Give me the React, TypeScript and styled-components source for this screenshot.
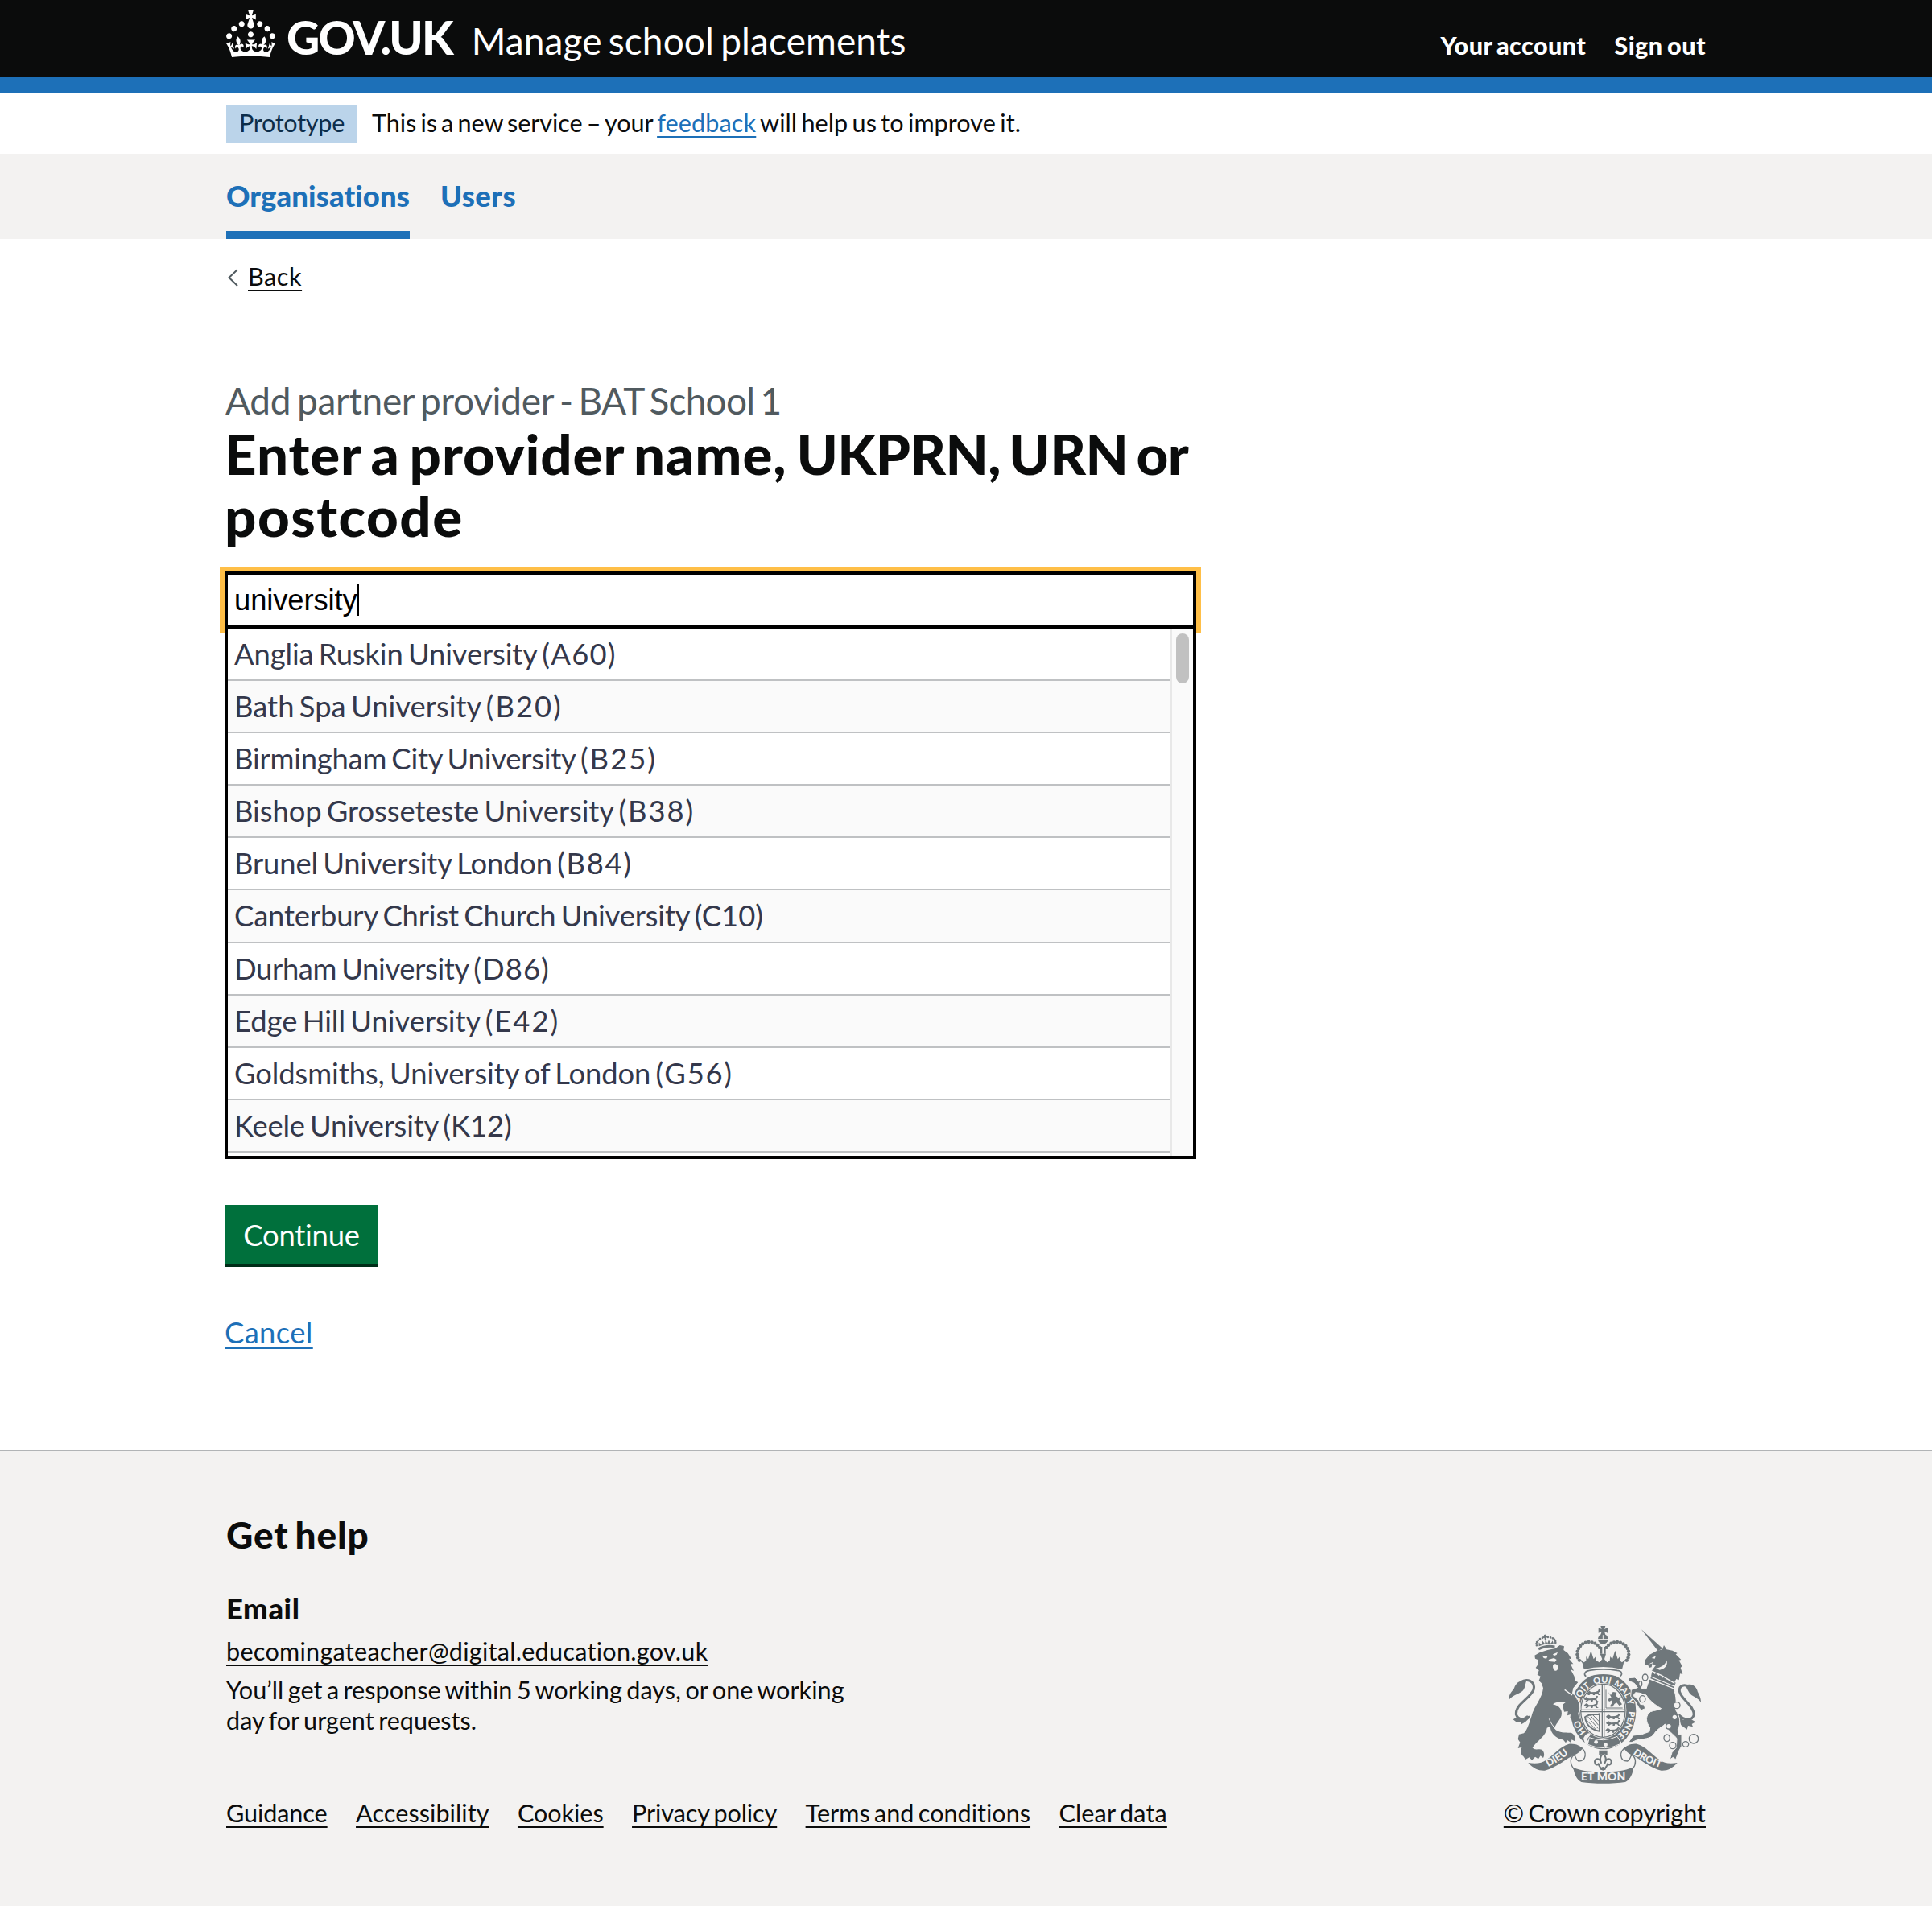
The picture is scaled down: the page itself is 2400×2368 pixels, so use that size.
import React from 'react';
import styled, { createGlobalStyle } from 'styled-components';

const c = {
  ink: '#0b0c0c',
  blue: '#1d70b8',
  grey: '#f3f2f1',
  secondary: '#505a5f',
  green: '#00703c',
  focus: '#ffbf47',
  crest: '#6f777b',
};

const GlobalStyle = createGlobalStyle`
  *, *::before, *::after { box-sizing: border-box; word-spacing: -0.08em; }
  body {
    margin: 0;
    background: #fff;
    color: ${c.ink};
    font-family: Lato, "Liberation Sans", sans-serif;
    font-variant-ligatures: none;
    -webkit-font-smoothing: antialiased;
  }
  h1, h2, h3, p, ul { margin: 0; padding: 0; }
  ul { list-style: none; }
`;

type Tracked = { $track?: number };
const tracking = (p: Tracked) => `letter-spacing: ${p.$track ?? 0}em;`;

const Page = styled.div`
  display: flex;
  flex-direction: column;
  min-height: 2368px;
`;

const Container = styled.div`
  width: 1838px;
  margin: 0 auto;
`;

const Run = styled.span<Tracked>`
  ${tracking}
`;

/* Header */
const HeaderBar = styled.header`
  height: 115px;
  background: ${c.ink};
  border-bottom: 19px solid ${c.blue};
  color: #fff;
`;
const HeaderRow = styled(Container)`
  display: flex;
  align-items: baseline;
  padding-top: 16px;
  white-space: nowrap;
`;
const CrownIcon = styled.svg`
  align-self: flex-start;
  width: 61px;
  height: 58px;
  margin: -3px 14px 0 0;
  fill: #fff;
`;
const LogoType = styled.span<Tracked>`
  font-size: 57px;
  line-height: 60px;
  font-weight: 900;
  ${tracking}
`;
const ServiceName = styled.span<Tracked>`
  margin-left: 24px;
  font-size: 46px;
  line-height: 58px;
  ${tracking}
`;
const AccountNav = styled.nav`
  display: flex;
  gap: 35px;
  margin-left: auto;
`;
const AccountLink = styled.a<Tracked>`
  font-size: 30.6px;
  line-height: 38px;
  font-weight: 900;
  ${tracking}
`;

/* Phase banner */
const PhaseRow = styled(Container)`
  display: flex;
  height: 76px;
  padding-top: 15px;
  font-size: 30.6px;
  line-height: 46px;
  white-space: nowrap;
`;
const Tag = styled.strong<Tracked>`
  width: 163px;
  height: 48px;
  margin-right: 18px;
  background: #bbd4ea;
  color: #0c2d4a;
  font-weight: 400;
  text-align: center;
  ${tracking}
`;
const PhaseText = styled.p<Tracked>`
  ${tracking}
`;

const Link = styled.a<Tracked & { $ink?: boolean }>`
  color: ${p => (p.$ink ? c.ink : c.blue)};
  text-decoration: underline;
  text-decoration-thickness: 2px;
  text-underline-offset: 5px;
  text-decoration-skip-ink: none;
  white-space: nowrap;
  ${p => (p.$track === undefined ? '' : tracking(p))}
`;

/* Primary navigation */
const PrimaryNav = styled.nav`
  height: 106px;
  background: ${c.grey};
`;
const NavList = styled(Container)`
  display: flex;
  gap: 38px;
`;
const NavItem = styled.a<Tracked & { $current?: boolean }>`
  height: 106px;
  padding-top: 29px;
  border-bottom: 10px solid ${p => (p.$current ? c.blue : 'transparent')};
  color: ${c.blue};
  font-size: 36.4px;
  line-height: 47px;
  font-weight: 900;
  ${tracking}
`;

/* Main */
const Main = styled.main`
  width: 1842px;
  height: 1504px;
  margin: 0 auto;
  padding-top: 28px;
`;
const BackRow = styled.div`
  display: flex;
  align-items: center;
  gap: 12px;
  padding-left: 4px;
  height: 38px;
  margin-bottom: 106px;
  font-size: 30.6px;
  line-height: 38px;
`;
const Chevron = styled.svg`
  width: 13px;
  height: 22px;
  margin-top: 2px;
  fill: none;
  stroke: ${c.secondary};
  stroke-width: 2;
`;
const Column = styled.div`
  width: 1207px;
`;
const Caption = styled.span<Tracked>`
  display: block;
  color: ${c.secondary};
  font-size: 46px;
  line-height: 57px;
  padding-left: 1px;
  ${tracking}
`;
const Heading = styled.h1`
  margin-bottom: 30.8px;
  font-size: 69px;
  line-height: 76.6px;
  font-weight: 900;
`;
const Field = styled.div`
  display: flex;
  align-items: center;
  height: 71px;
  padding-left: 8px;
  border: 4px solid #000;
  box-shadow: 0 0 0 6px ${c.focus};
  color: #000;
  font-family: "Liberation Sans", Arial, sans-serif;
  font-size: 36.4px;
  line-height: 63px;
  letter-spacing: -0.1px;
`;
const Caret = styled.span`
  width: 2px;
  height: 40px;
  background: #000;
`;
const Menu = styled.div`
  position: relative;
  display: flex;
  height: 659px;
  margin-bottom: 57px;
  border: solid #000;
  border-width: 0 4px 4px;
  background: #fff;
  overflow: hidden;
`;
const Options = styled.ul`
  flex: 1;
`;
const Option = styled.li<Tracked>`
  height: 65.1px;
  padding-left: 8px;
  border-bottom: 2px solid #bfc1c3;
  color: #34384b;
  font-size: 36.4px;
  line-height: 63px;
  white-space: nowrap;
  ${tracking}
  &:nth-child(even) { background: #fafafa; }
`;
const ScrollTrack = styled.div`
  width: 28px;
  padding: 6px 0 0 5px;
  border-left: 2px solid #e8e8e8;
  background: #fafafa;
`;
const ScrollThumb = styled.div`
  width: 16px;
  height: 62px;
  border-radius: 8px;
  background: #c1c1c1;
`;
const Button = styled.button<Tracked>`
  display: block;
  width: 191px;
  height: 73px;
  margin: 0 0 61px;
  padding: 1px 0 0;
  border: 0;
  background: ${c.green};
  box-shadow: 0 4px 0 #002d18;
  color: #fff;
  font: 400 36.4px/72px Lato, sans-serif;
  ${tracking}
`;
const CancelRow = styled.p`
  font-size: 36.4px;
  line-height: 48px;
`;

/* Footer */
const FooterBar = styled.footer`
  flex: 1;
  padding-top: 75px;
  border-top: 2px solid #b1b4b6;
  background: ${c.grey};
  font-size: 30.6px;
  line-height: 38.3px;
`;
const FooterRow = styled(Container)`
  display: flex;
  justify-content: space-between;
  align-items: flex-end;
`;
const FooterTitle = styled.h2<Tracked>`
  margin-bottom: 38.6px;
  font-size: 46px;
  line-height: 57px;
  font-weight: 900;
  ${tracking}
`;
const FooterSubtitle = styled.h3<Tracked>`
  margin-bottom: 11px;
  font-size: 36.4px;
  line-height: 48px;
  font-weight: 900;
  ${tracking}
`;
const FooterText = styled.p<Tracked>`
  margin: 10px 0 77px;
  ${tracking}
`;
const FooterLinks = styled.div`
  display: flex;
  gap: 35.4px;
`;
const Copyright = styled.div`
  display: flex;
  flex-direction: column;
  align-items: center;
  gap: 16px;
`;
const Crest = styled.svg`
  width: 244px;
  height: 200px;
  margin-left: 3px;
  font-family: Lato, sans-serif;
  font-weight: 900;
  text { word-spacing: 0; }
`;

const Crown = () => (
  <CrownIcon viewBox="0 0 32 30" preserveAspectRatio="none">
    <path d="M22.6 10.4c-1 .4-2-.1-2.4-1-.4-.9.1-2 1-2.4.9-.4 2 .1 2.4 1s-.1 2-1 2.4m-5.9 6.7c-.9.4-2-.1-2.4-1-.4-.9.1-2 1-2.4.9-.4 2 .1 2.4 1s-.1 2-1 2.4m10.8-3.7c-1 .4-2-.1-2.4-1-.4-.9.1-2 1-2.4.9-.4 2 .1 2.4 1s0 2-1 2.4m3.3 4.8c-1 .4-2-.1-2.4-1-.4-.9.1-2 1-2.4.9-.4 2 .1 2.4 1s-.1 2-1 2.4M17 4.7l2.3 1.2V2.5l-2.3.7-.2-.2.9-3h-3.4l.9 3-.2.2c-.1.1-2.3-.7-2.3-.7v3.4L15 4.7c.1.1.1.2.2.2l-1.3 4c-.1.2-.1.4-.1.6 0 1.1.8 2 1.9 2.2h.7c1-.2 1.9-1.1 1.9-2.1 0-.2 0-.4-.1-.6l-1.3-4c-.1-.2 0-.2.1-.3m-7.6 5.7c.9.4 2-.1 2.4-1 .4-.9-.1-2-1-2.4-.9-.4-2 .1-2.4 1s0 2 1 2.4m-5 3c.9.4 2-.1 2.4-1 .4-.9-.1-2-1-2.4-.9-.4-2 .1-2.4 1s.1 2 1 2.4m-3.2 4.8c.9.4 2-.1 2.4-1 .4-.9-.1-2-1-2.4-.9-.4-2 .1-2.4 1s0 2 1 2.4m14.8 11c4.4 0 8.6.3 12.3.8 1.1-4.5 2.4-7 3.7-8.8l-2.5-.9c.2 1.3.3 1.9 0 2.7-.4-.4-.8-1.1-1.1-2.3l-1.2 4c.7-.5 1.3-.8 2-.9-1.1 2.5-2.6 3.1-3.5 3-1.1-.2-1.7-1.2-1.5-2.1.3-1.2 1.5-1.5 2.1-.1 1.1-2.3-.8-3-2-2.3 1.9-1.9 2.1-3.5.6-5.6-2.1 1.6-2.1 3.2-1.2 5.5-1.2-1.4-3.2-.6-2.5 1.6.9-1.4 2.1-.5 1.9.8-.2 1.1-1.7 2.1-3.5 1.9-2.7-.2-2.9-2.1-2.9-3.6.7-.1 1.9.5 2.9 1.9l.4-4.3c-1.1 1.1-2.1 1.4-3.2 1.4.4-1.2 2.1-3 2.1-3h-5.4s1.7 1.9 2.1 3c-1.1 0-2.1-.2-3.2-1.4l.4 4.3c1-1.4 2.2-2 2.9-1.9-.1 1.5-.2 3.4-2.9 3.6-1.9.2-3.4-.8-3.5-1.9-.2-1.3 1-2.2 1.9-.8.7-2.3-1.2-3-2.5-1.6.9-2.2.9-3.9-1.2-5.5-1.5 2-1.3 3.7.6 5.6-1.2-.7-3.1 0-2 2.3.6-1.4 1.8-1.1 2.1.1.2.9-.3 1.9-1.5 2.1-.9.2-2.4-.5-3.5-3 .6 0 1.2.3 2 .9l-1.2-4c-.3 1.1-.7 1.9-1.1 2.3-.3-.8-.2-1.4 0-2.7l-2.9.9C1.3 23 2.6 25.5 3.7 30c3.7-.5 7.9-.8 12.3-.8" />
  </CrownIcon>
);

const arcDots = (cx: number, cy: number, rx: number, ry: number, from: number, to: number, n: number) =>
  Array.from({ length: n }, (_, i) => {
    const a = ((from + ((to - from) * i) / (n - 1)) * Math.PI) / 180;
    return [cx + rx * Math.cos(a), cy - ry * Math.sin(a)];
  });

/* One passant lion of the quartered shield. */
const Passant = ({ x, y }: { x: number; y: number }) => (
  <path
    transform={`translate(${x} ${y})`}
    d="M2 6 L8 1 L14 3 L18 7 L34 6 L44 2 L47 -4 L52 -2 L50 5 L46 9 L50 15 L55 18 L46 18 L42 13 L34 12 L32 18 L25 18 L26 13 L18 13 L12 18 L5 18 L10 13 L4 12 L0 9 Z"
  />
);

/* Baseline of the garter motto, clockwise from the bottom. */
const ring = 'M424 482 A94 106 0 0 1 424 270 A94 106 0 0 1 424 482';
const ringWords: [string, number][] = [['HO', 98], ['SOIT', 226], ['QUI', 310], ['MAL', 388], ['Y', 438], ['PENSE', 522]];

const RoyalArms = () => (
  <Crest viewBox="68 52 732 600" fill={c.crest}>
    <defs>
      <path id="ring" d={ring} />
      <path id="dieu" d="M206 590 Q258 566 306 526" />
      <path id="droit" d="M524 530 Q578 570 650 591" />
      <clipPath id="oval"><ellipse cx="423" cy="374" rx="80" ry="97" /></clipPath>
    </defs>

    {/* lion tail */}
    <path fill="none" stroke={c.crest} strokeWidth="9" d="M150 396 C128 412 106 408 99 388 C96 350 150 330 164 296 C172 264 140 252 116 268" />
    <path d="M72 333 C72 308 88 300 92 290 C98 270 116 258 138 262 C134 270 134 284 128 294 C120 310 92 310 72 333Z" />
    <path d="M88 407 L104 396 L122 404 L140 392 L152 398 L134 416 L116 426 L118 414 L102 418Z" />

    {/* garter */}
    <ellipse cx="424" cy="376" rx="122" ry="142" />
    <ellipse cx="423" cy="374" rx="87" ry="103" fill={c.grey} />
    <ellipse cx="423" cy="374" rx="83" ry="99" fill="none" stroke={c.crest} strokeWidth="4" />
    <path fill="none" stroke={c.crest} strokeWidth="4" d="M420 276 V472 M427 276 V472 M341 371 H505 M341 378 H505" />
    <g clipPath="url(#oval)">
      <Passant x={360} y={298} />
      <Passant x={352} y={322} />
      <Passant x={352} y={346} />
      <Passant x={434} y={388} />
      <Passant x={434} y={412} />
      <Passant x={432} y={438} />
      <path d="M442 304 L452 316 L460 304 L474 306 L470 318 L480 326 L490 322 L484 336 L494 350 L484 356 L474 344 L466 348 L458 360 L448 358 L456 346 L458 334 L446 340 L440 332 L454 324Z" />
      <path fill="none" stroke={c.crest} strokeWidth="3" d="M434 296 V364 H496" />
      <path fill="none" stroke={c.crest} strokeWidth="6" d="M356 398 C376 382 400 392 410 386 V450 C384 446 360 430 356 398Z" />
      <path fill="none" stroke={c.crest} strokeWidth="3" d="M366 396 L404 440 M376 392 L406 428 M386 391 L408 414 M360 408 L396 444" />
    </g>
    {/* garter buckle */}
    <path fill={c.grey} d="M350 478 C356 462 372 452 376 462 C374 472 362 474 366 484 C374 492 366 504 356 496Z" />
    <path d="M372 474 Q424 494 476 470 L492 496 Q430 528 366 500Z" stroke={c.grey} strokeWidth="3" />
    <circle cx="397" cy="491" r="7" fill={c.grey} />
    <circle cx="433" cy="501" r="7" fill={c.grey} />
    <g fill={c.grey} fontSize="33" textAnchor="middle">
      {ringWords.map(([word, offset]) => (
        <text key={word}><textPath href="#ring" startOffset={offset}>{word}</textPath></text>
      ))}
    </g>

    {/* lion */}
    <path d="M168 168 L186 158 L216 148 L246 142 L262 130 L278 134 L276 148 L292 160 L306 182 L296 180 L312 200 L302 200 L314 226 L302 220 L316 246 L318 262 L330 268 L312 290 L308 308 L322 326 L332 346 L334 366 L328 382 C328 392 330 396 332 401 L320 396 L318 406 L308 396 L300 404 L302 388 L290 392 L292 376 L278 378 L272 352 L284 342 C262 344 250 338 236 350 C262 356 272 372 268 392 C262 412 246 424 242 440 C254 458 284 456 304 456 C316 462 322 474 318 488 L306 482 L304 494 L290 484 L284 494 L274 482 C254 480 234 464 228 444 L226 432 L214 438 C212 468 176 486 160 512 C168 524 186 514 196 520 C204 528 206 540 200 550 L190 542 L182 554 L170 546 L158 558 L148 548 L134 556 L126 544 C114 536 118 522 120 510 L106 514 L114 492 L106 480 L110 462 L128 458 C142 444 148 418 156 396 C166 356 196 330 200 290 L194 272 L184 262 L190 246 L178 240 L184 224 L172 214 L182 200 L180 184 L170 180Z" />
    <path fill="none" stroke={c.grey} strokeWidth="4" d="M336 266 L315 291 L312 308 L326 325 L336 346 L338 368 L332 384 L336 404 M280 296 L308 316" />
    <path fill={c.grey} d="M196 168 L216 172 L212 180 L202 178Z M236 164 L254 156 L250 166 L240 170Z M220 184 L240 178 L250 184 L244 192 L222 190Z M238 202 C246 196 256 204 256 214 C254 224 248 228 242 224 C236 216 234 208 238 202Z" />
    <path fill="none" stroke={c.grey} strokeWidth="3" d="M222 404 C228 420 236 430 246 442" />
    {/* lion crown */}
    <g transform="rotate(-8 210 120)">
      <path d="M178 136 Q210 124 242 136 L240 144 Q210 134 181 145Z" />
      <path d="M182 130 L184 116 L192 126 L198 112 L206 124 L210 108 L215 124 L222 112 L228 126 L236 116 L238 130 Q210 122 182 130Z" />
      {arcDots(210, 122, 36, 22, 190, -10, 13).map(([x, y], i) => <circle key={i} cx={x} cy={y} r="4" />)}
      <path d="M207 90 h7 v6 h6 v6 h-6 v8 h-7 v-8 h-6 v-6 h6Z" />
    </g>

    {/* unicorn tail */}
    <path fill="none" stroke={c.crest} strokeWidth="9" d="M704 388 C726 412 756 414 762 388 C760 352 716 334 708 302 C706 280 726 272 750 288" />
    <path d="M788 344 C780 324 752 322 744 306 C738 296 734 288 730 278 C752 272 768 280 774 298 C776 310 788 318 788 344Z" />
    <path d="M702 392 L722 408 L744 402 L768 416 L754 424 L758 434 L740 430 L736 444 L714 428Z" />
    {/* unicorn */}
    <path d="M566 71 L645 142 L628 152Z" />
    <path d="M578 188 L596 166 L622 152 L644 146 L650 130 L660 146 L682 150 L700 160 L694 164 L714 184 L706 186 L718 208 L712 214 L720 238 L710 236 L706 260 L696 256 L688 270 L640 242 L604 226 L620 204 L606 200 L604 212 L594 214 L592 206 L580 202Z" />
    <path fill={c.grey} d="M604 178 L620 170 L616 180Z M592 201 L608 193 L610 197Z M620 216 C640 212 654 204 660 186 C666 204 654 218 634 222Z" />
    <path d="M606 228 L616 238 L622 232 L630 244 L638 238 L644 252 L654 244 L658 258 L668 252 L672 266 L682 262 L694 270 L686 290 L600 254Z" />
    <path stroke={c.grey} strokeWidth="4" fill="none" d="M601 247 L688 283 M604 226 L640 242 L690 272" />
    <path stroke={c.grey} strokeWidth="3" d="M596 256 L686 292 C698 320 696 350 694 372 C708 392 716 420 702 444 L704 462 L716 462 L716 506 L706 524 L694 556 L684 548 L672 556 L680 530 L696 512 L698 478 C688 462 664 452 654 424 C642 436 624 442 614 460 C602 480 574 478 548 484 L530 492 L518 492 L536 466 L568 462 L596 452 L598 436 C580 416 582 390 600 378 C616 372 632 372 640 366 C616 352 596 336 584 316 L560 308 L544 306 L536 318 L556 336 L562 350 L576 352 L580 366 L566 372 L556 362 L544 340 L526 320 L528 296 L552 288 L540 272 L516 262 L520 252 L542 250 L556 264 L566 290 L584 292Z" />
    {/* chain */}
    <g fill={c.grey} stroke={c.crest} strokeWidth="4">
      <ellipse cx="580" cy="250" rx="10" ry="12" />
      <ellipse cx="562" cy="274" rx="6" ry="10" />
      <ellipse cx="570" cy="330" rx="11" ry="12" />
      <circle cx="698" cy="354" r="12" />
      <circle cx="690" cy="398" r="10" />
      <circle cx="668" cy="432" r="10" />
      <ellipse cx="661" cy="476" rx="11" ry="13" />
      <circle cx="683" cy="504" r="12" />
      <ellipse cx="731" cy="499" rx="11" ry="10" />
      <circle cx="761" cy="479" r="17" />
    </g>

    {/* crown */}
    <path fill={c.grey} d="M348 238 Q352 218 424 216 Q496 218 498 238 L488 250 Q424 226 360 250Z" />
    <path fill="none" stroke={c.crest} strokeWidth="5" d="M360 246 C350 240 354 226 372 224 Q424 216 476 224 C496 226 496 240 486 246" />
    <path d="M352 220 L346 196 L334 182 L344 186 L352 194 L360 188 L360 172 L368 182 L378 150 L388 182 L396 172 L398 188 L410 194 L420 182 L412 162 L434 162 L428 182 L438 194 L448 188 L450 172 L458 182 L468 150 L478 182 L486 172 L486 188 L494 194 L502 186 L512 182 L500 196 L494 220 Q424 202 352 220Z" />
    {arcDots(372, 162, 45, 44, 214, 32, 13).map(([x, y], i) => <circle key={i} cx={x} cy={y} r="6.5" />)}
    {arcDots(474, 162, 45, 44, -34, 148, 13).map(([x, y], i) => <circle key={i} cx={x} cy={y} r="6.5" />)}
    <path d="M413 136 h7 v26 h-7Z M426 136 h7 v26 h-7Z" />
    <circle cx="423" cy="107" r="19" />
    <path stroke={c.grey} strokeWidth="3" d="M404 108 H442 M423 90 V108" />
    <path d="M414 58 H432 L428 70 L440 64 V84 L428 78 L432 92 H414 L418 78 L406 84 V64 L418 70Z" />

    {/* pendant fleur */}
    <path d="M408 522 H439 V540 L424 534 L408 540Z" />
    <path fill={c.grey} stroke={c.crest} strokeWidth="6" strokeLinejoin="round" d="M423 534 C436 546 434 560 430 568 C434 552 452 548 454 564 C454 576 444 578 440 572 C438 582 430 586 430 592 H416 C416 586 408 582 406 572 C402 578 392 576 392 564 C394 548 412 552 416 568 C412 560 410 546 423 534Z" />
    <circle cx="423" cy="590" r="7" />

    {/* ribbons */}
    <path d="M144 568 C176 574 196 568 210 558 C244 536 262 508 296 498 C322 496 340 506 346 516 C336 530 320 538 306 544 C274 562 244 588 206 597 C182 598 164 590 144 568Z" />
    <path d="M700 568 C668 574 650 568 636 558 C602 536 584 508 550 498 C524 496 508 506 502 516 C512 530 526 538 540 544 C572 562 602 588 640 597 C664 598 680 590 700 568Z" />
    <path fill="none" stroke={c.crest} strokeWidth="4" d="M340 510 C366 528 360 562 332 562 C318 558 326 544 314 540 C300 550 298 572 315 592 M508 510 C480 528 486 562 514 562 C528 558 520 544 532 540 C546 550 548 572 534 590" />
    <path d="M312 586 C346 600 380 602 424 602 C470 602 500 600 537 584 C534 610 524 632 506 640 C460 647 388 647 342 640 C324 630 316 610 312 586Z" />
    <g fill={c.grey} fontSize="38" textAnchor="middle">
      <text x="424" y="635" fontSize="42" textLength="166">ET MON</text>
      <text><textPath href="#dieu" startOffset="50%">DIEU</textPath></text>
      <text fontSize="37"><textPath href="#droit" startOffset="49%">DROIT</textPath></text>
    </g>
  </Crest>
);

/* Provider name and code, each with its own tracking. */
const providers: [string, number, string, number][] = [
  ['Anglia Ruskin University', -0.0033, '(A60)', 0.034],
  ['Bath Spa University', 0, '(B20)', 0.054],
  ['Birmingham City University', -0.006, '(B25)', 0.055],
  ['Bishop Grosseteste University', -0.002, '(B38)', 0.053],
  ['Brunel University London', -0.004, '(B84)', 0.045],
  ['Canterbury Christ Church University', -0.004, '(C10)', 0],
  ['Durham University', -0.0095, '(D86)', 0.03],
  ['Edge Hill University', -0.001, '(E42)', 0.054],
  ['Goldsmiths, University of London', -0.0025, '(G56)', 0.048],
  ['Keele University', -0.006, '(K12)', -0.002],
];

const footerLinks: [string, number][] = [
  ['Guidance', -0.003],
  ['Accessibility', 0.002],
  ['Cookies', -0.002],
  ['Privacy policy', -0.0035],
  ['Terms and conditions', 0],
  ['Clear data', 0.004],
];

export default function App() {
  return (
    <Page>
      <GlobalStyle />
      <HeaderBar>
        <HeaderRow>
          <Crown />
          <LogoType $track={-0.033}>GOV.UK</LogoType>
          <ServiceName $track={0.0023}>Manage school placements</ServiceName>
          <AccountNav>
            <AccountLink $track={0.0136}>Your account</AccountLink>
            <AccountLink $track={0.016}>Sign out</AccountLink>
          </AccountNav>
        </HeaderRow>
      </HeaderBar>

      <PhaseRow>
        <Tag $track={-0.009}>Prototype</Tag>
        <PhaseText $track={-0.003}>
          This is a new service – your <Link $track={0.004}>feedback</Link>
          <Run $track={0.001}> will help us to improve it.</Run>
        </PhaseText>
      </PhaseRow>

      <PrimaryNav>
        <NavList>
          <NavItem $current $track={0.0035}>Organisations</NavItem>
          <NavItem $track={0.012}>Users</NavItem>
        </NavList>
      </PrimaryNav>

      <Main>
        <BackRow>
          <Chevron viewBox="0 0 13 22"><path d="M12 1 L1.5 11 L12 21" /></Chevron>
          <Link $ink $track={0.018}>Back</Link>
        </BackRow>
        <Column>
          <Caption $track={-0.007}>
            Add partner provider <Run $track={-0.017}>- BAT School 1</Run>
          </Caption>
          <Heading>
            <Run $track={0.0137}>Enter a provider name, </Run>
            <Run $track={-0.0085}>UKPRN, URN or </Run>
            <Run $track={0.022}>postcode</Run>
          </Heading>
          <Field>university<Caret /></Field>
          <Menu>
            <Options>
              {providers.map(([name, track, code, codeTrack]) => (
                <Option key={code} $track={track}>
                  {name} <Run $track={codeTrack}>{code}</Run>
                </Option>
              ))}
            </Options>
            <ScrollTrack><ScrollThumb /></ScrollTrack>
          </Menu>
          <Button $track={-0.006}>Continue</Button>
          <CancelRow><Link $track={0.01}>Cancel</Link></CancelRow>
        </Column>
      </Main>

      <FooterBar>
        <FooterRow>
          <div>
            <FooterTitle $track={0.019}>Get help</FooterTitle>
            <FooterSubtitle $track={0.016}>Email</FooterSubtitle>
            <Link $ink $track={0.0086}>becomingateacher@digital.education.gov.uk</Link>
            <FooterText $track={0.001}>
              You’ll get a response within 5 working days, or one working<br />
              day for urgent requests.
            </FooterText>
            <FooterLinks>
              {footerLinks.map(([label, track]) => <Link key={label} $ink $track={track}>{label}</Link>)}
            </FooterLinks>
          </div>
          <Copyright>
            <RoyalArms />
            <Link $ink $track={-0.001}>© Crown copyright</Link>
          </Copyright>
        </FooterRow>
      </FooterBar>
    </Page>
  );
}
